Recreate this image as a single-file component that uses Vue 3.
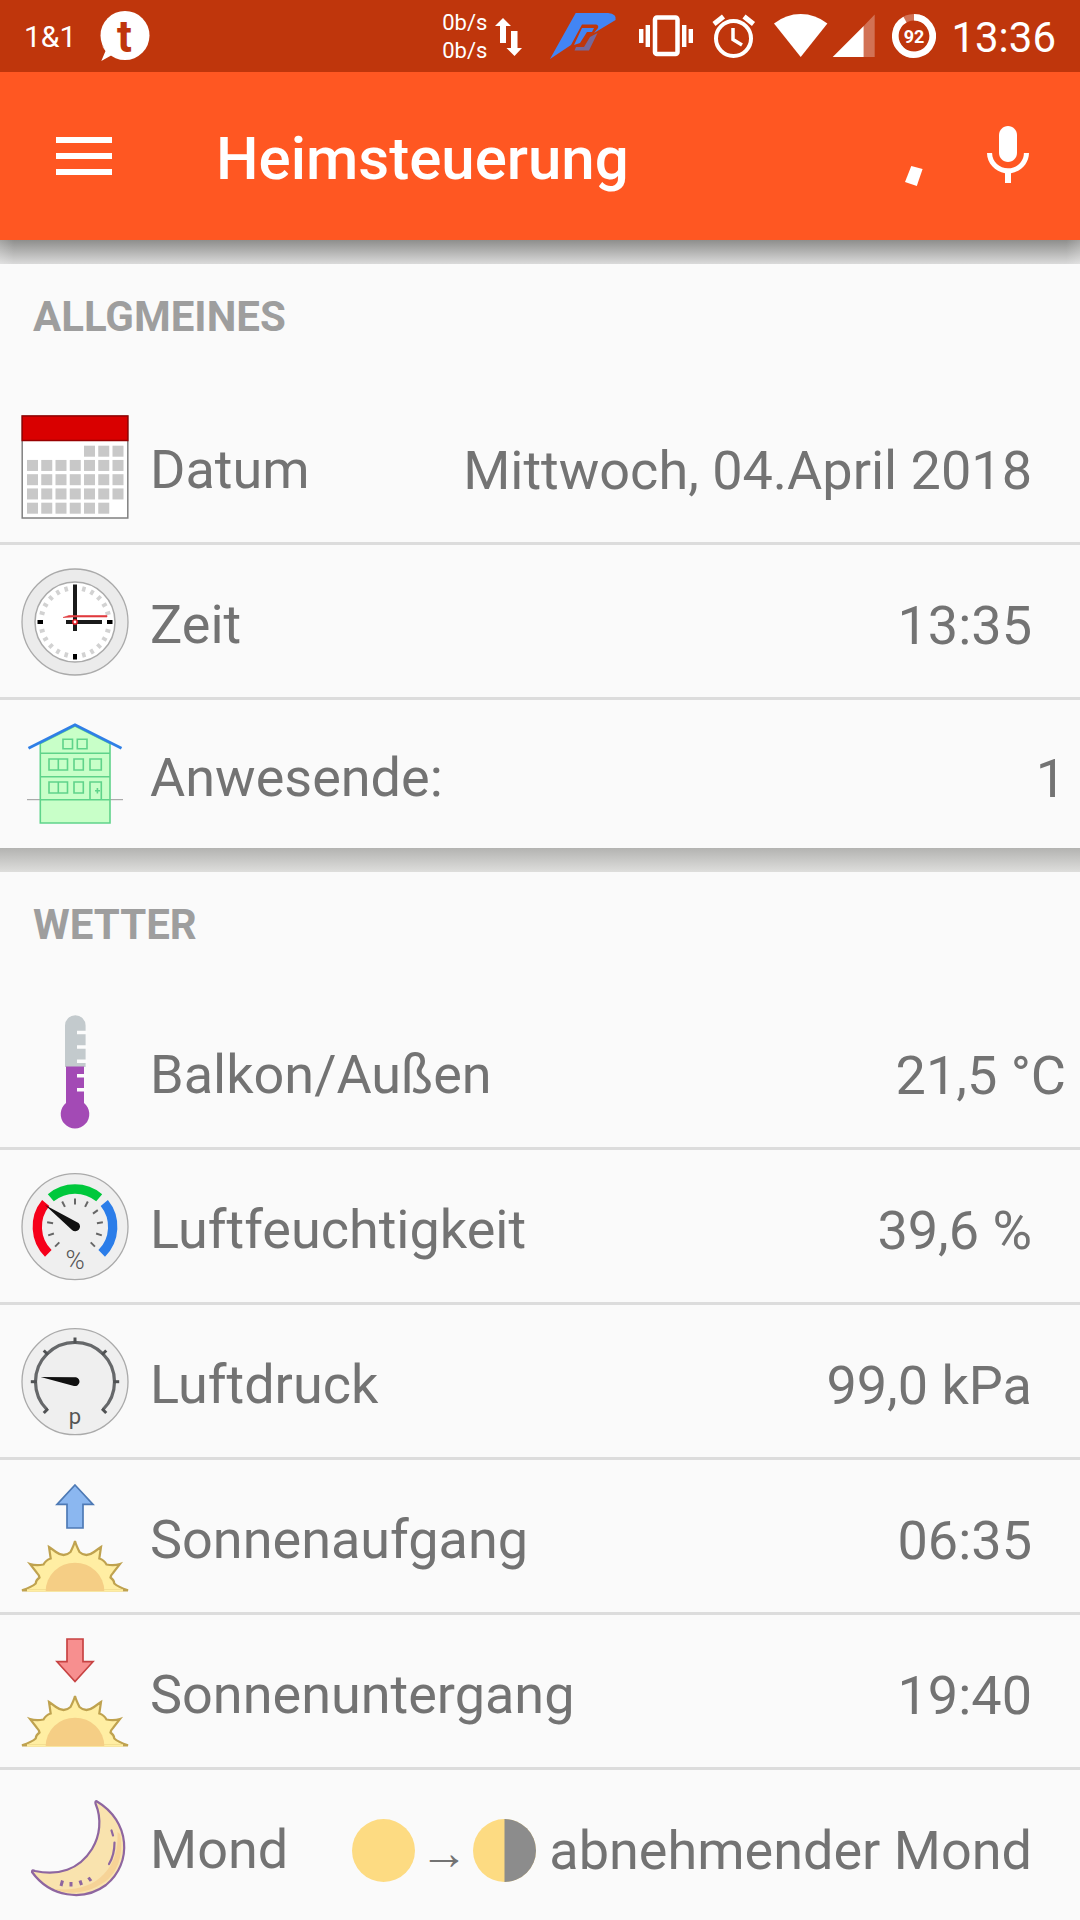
<script setup>
import {ref} from 'vue';

const sections = ref([
  {
    title: 'ALLGMEINES',
    items: [
      {icon: 'calendar', label: 'Datum', value: 'Mittwoch, 04.April 2018'},
      {icon: 'clock', label: 'Zeit', value: '13:35'},
      {icon: 'house', label: 'Anwesende:', value: '1', wide: true},
    ],
  },
  {
    title: 'WETTER',
    items: [
      {icon: 'thermometer', label: 'Balkon/Außen', value: '21,5 °C', wide: true},
      {icon: 'humidity', label: 'Luftfeuchtigkeit', value: '39,6 %'},
      {icon: 'pressure', label: 'Luftdruck', value: '99,0 kPa'},
      {icon: 'sunrise', label: 'Sonnenaufgang', value: '06:35'},
      {icon: 'sunset', label: 'Sonnenuntergang', value: '19:40'},
      {icon: 'moon', label: 'Mond', value: 'abnehmender Mond', phases: true},
    ],
  },
]);

// day squares of the calendar icon, first and last week are not full
const days = [];
for (let row = 0; row < 5; row++) {
  for (let col = 0; col < 7; col++) {
    if ((row === 0 && col < 4) || (row === 4 && col > 5)) continue;
    days.push({x: 6 + col * 14.25, y: 33.7 + row * 14.25});
  }
}

const clockTicks = Array.from({length: 24}, (_, i) => i * 15).filter((a) => a % 90 !== 0);
const humidityTicks = [-135, -108, -81, -27, 0, 27, 54, 81, 108, 135];
const pressureTicks = [-135, -90, -45, 0, 45, 90, 135];
</script>

<template>
  <div class="screen">
    <div class="status-bar">
      <span class="carrier">1&amp;1</span>
      <svg width="50" height="72" viewBox="100 0 50 72">
        <circle cx="125" cy="35.500" r="24.500" fill="#fff"/>
        <path d="M102 46L105.500 51L101.300 61L112 55Z" fill="#fff"/>
        <text x="124.500" y="51.500" class="bubble-letter">t</text>
      </svg>
      <div class="status-right">
        <div class="traffic">
          <div class="speed">
            <span>0b/s</span>
            <span>0b/s</span>
          </div>
          <svg width="28" height="72" viewBox="491 0 28 72" fill="#fff">
            <path d="M499 18L507 26H502V43H496V26H491Z"/>
            <path d="M510.500 56L518 48H513.500V31H507V48H502.500Z"/>
          </svg>
        </div>
        <svg width="86" height="72" viewBox="534 0 86 72">
          <path d="M546 59L571.700 13H604Q613 14 611.600 20L590 33L594 28Q595 25 592 24.500H578L567 45Z" fill="#4285f4"/>
          <path d="M570 45L578 28H590L588 32H583L576 43Z" fill="#4285f4"/>
          <path d="M593.500 33L585 50.500H570.500L572 47H580L586 37Z" fill="#75689c"/>
        </svg>
        <svg width="58" height="72" viewBox="636 0 58 72" fill="#fff">
          <rect x="652" y="17.500" width="22.500" height="36.500" rx="2" fill="none" stroke="#fff" stroke-width="4.500"/>
          <rect x="642.600" y="25" width="4.400" height="22"/>
          <rect x="636" y="29" width="4.400" height="14"/>
          <rect x="679" y="25" width="4.400" height="22"/>
          <rect x="685.600" y="29" width="4.400" height="14"/>
        </svg>
        <svg width="47" height="72" viewBox="710 0 47 72" fill="none" stroke="#fff" stroke-width="4">
          <circle cx="731.500" cy="38.500" r="17.500"/>
          <path d="M731 28V39.500L740 45" stroke-width="3.500"/>
          <path d="M712 24L721.500 16.500M751.500 24L742 16.500" stroke-width="5"/>
        </svg>
        <svg width="103" height="72" viewBox="773 0 103 72" fill="#fff">
          <path d="M799.700 57L773 23.500Q785 14 799.700 14T826.400 23.500Z"/>
          <path d="M831.700 57L862.700 26V57Z"/>
          <path d="M862.700 26L873.700 14.500V57H862.700Z" opacity="0.3"/>
        </svg>
        <svg width="44" height="72" viewBox="892 0 44 72">
          <circle cx="914" cy="36" r="18.700" fill="none" stroke="#fff" stroke-opacity="0.3" stroke-width="6.600"/>
          <path d="M914 17.300A18.700 18.700 0 1 1 905 19.600" fill="none" stroke="#fff" stroke-width="6.600"/>
          <text x="914" y="43" class="battery">92</text>
        </svg>
        <span class="time">13:36</span>
      </div>
    </div>

    <header class="app-bar">
      <button class="icon-button" aria-label="Menü">
        <svg width="56" height="38" viewBox="0 0 56 38" fill="#fff">
          <path d="M0 0H56V6H0ZM0 16H56V22H0ZM0 32H56V38H0Z"/>
        </svg>
      </button>
      <h1>Heimsteuerung</h1>
      <svg width="72" height="72" viewBox="0 0 72 72" fill="#fff">
        <path d="M35.300 46L46.600 49L40.800 66L29 62Z"/>
      </svg>
      <button class="icon-button" aria-label="Spracheingabe">
        <svg width="72" height="72" viewBox="0 0 24 24" fill="#fff">
          <path d="M12 14c1.660 0 3-1.340 3-3V5c0-1.660-1.340-3-3-3S9 3.340 9 5v6c0 1.660 1.340 3 3 3z"/>
          <path d="M17.300 11c0 3-2.540 5.100-5.300 5.100S6.700 14 6.700 11H5c0 3.410 2.720 6.230 6 6.720V21h2v-3.280c3.280-.48 6-3.300 6-6.720h-1.700z"/>
        </svg>
      </button>
    </header>

    <main class="content">
      <section v-for="section in sections" :key="section.title">
        <h2>{{ section.title }}</h2>
        <ul>
          <li v-for="item in section.items" :key="item.label">
            <svg class="icon" viewBox="0 0 108 108">
              <g v-if="item.icon === 'calendar'">
                <rect x="1.200" y="4" width="105.600" height="102" fill="#fff" stroke="#808080" stroke-width="1.500"/>
                <rect x="1.200" y="4" width="105.600" height="24.500" fill="#d90000" stroke="#900" stroke-width="1.500"/>
                <rect v-for="(day, i) in days" :key="i" :x="day.x" :y="day.y" width="11" height="11" fill="#c8c8c8"/>
              </g>

              <g v-else-if="item.icon === 'clock'">
                <circle cx="54" cy="55" r="53" fill="#ebebeb" stroke="#aaa" stroke-width="1.300"/>
                <circle cx="54" cy="55" r="40" fill="#fff" stroke="#aaa" stroke-width="1.500"/>
                <path v-for="a in clockTicks" :key="a" d="M54 18.500V23.500" :transform="`rotate(${a} 54 55)`" stroke="#d2d2d2" stroke-width="3.500"/>
                <path d="M86 55H91.500M54 87V92.500M16.500 55H22" stroke="#000" stroke-width="4"/>
                <path d="M54 17.500V64M45 55H81" stroke="#1a1a1a" stroke-width="4"/>
                <path d="M42 50.500L48 48.500H86V50H52Z" fill="#e03a3e" stroke="#e03a3e" stroke-width="0.600"/>
                <circle cx="54" cy="55" r="2.200" fill="#fff" stroke="#e01b24" stroke-width="1.600"/>
              </g>

              <g v-else-if="item.icon === 'house'" fill="none" stroke="#5fd38a" stroke-width="1.600">
                <path d="M6 79.700H102" stroke="#999" stroke-width="1"/>
                <path d="M19.300 23.500L54 6L89 23.500V103H19.300Z" fill="#c8ffc8"/>
                <path d="M19.300 33.300H89M19.300 56.700H89M19.300 79.700H89"/>
                <path d="M42 19.300h9.500v9.500H42ZM56.300 19.300h9.700v9.500h-9.700Z"/>
                <path d="M28 39h18.500v11H28ZM37.300 39v11M53 39h9.300v11H53ZM69 39h11.300v11H69Z"/>
                <path d="M28 62h18.500v11H28ZM37.300 62v11M53 62h9.300v11H53ZM69 79.700V62h11.300v17.700M74 70.700h5M76.400 68v5.400"/>
                <path d="M7.500 28.300L54 4.800L100.500 28.300" stroke="#2f7fe6" stroke-width="2.800"/>
              </g>

              <g v-else-if="item.icon === 'thermometer'">
                <path d="M44 8.500A10.300 10.300 0 0 1 64.600 8.500V50H44Z" fill="#c3cacd"/>
                <path d="M45 49.500H63V86A14.300 14.300 0 1 1 45 86Z" fill="#a34ab5"/>
                <path d="M56 15.500H66M56 30H66M56 44.300H66M56 58.700H66M56 72.700H66" stroke="#fcfcfc" stroke-width="3.500"/>
              </g>

              <g v-else-if="item.icon === 'humidity'" fill="none">
                <circle cx="54" cy="54.700" r="53" fill="#efefef" stroke="#aaa" stroke-width="1.300"/>
                <g stroke-width="9.300">
                  <path d="M27.300 81.400A37.700 37.700 0 0 1 24.700 31" stroke="#f6001a"/>
                  <path d="M29.800 25.800A37.700 37.700 0 0 1 78.200 25.800" stroke="#00c83c"/>
                  <path d="M83.300 31A37.700 37.700 0 0 1 80.700 81.400" stroke="#2b7de9"/>
                </g>
                <path v-for="a in humidityTicks" :key="a" d="M54 26.500V32.500" :transform="`rotate(${a} 54 54.7)`" stroke="#666" stroke-width="2"/>
                <path d="M24 33L57.500 51A4.500 4.500 0 1 1 51 58Z" fill="#111"/>
                <text x="54" y="97" class="gauge-text percent">%</text>
              </g>

              <g v-else-if="item.icon === 'pressure'" fill="none">
                <circle cx="54" cy="54.700" r="53" fill="#efefef" stroke="#aaa" stroke-width="1.300"/>
                <path d="M26 82.700A39.500 39.500 0 1 1 82 82.700" stroke="#66686a" stroke-width="3.200"/>
                <path v-for="a in pressureTicks" :key="a" d="M54 10.500V16.500" :transform="`rotate(${a} 54 54.7)`" stroke="#505254" stroke-width="3"/>
                <path d="M19.700 50L55 50.200A4.500 4.500 0 1 1 53 59Z" fill="#111"/>
                <text x="54" y="96.500" class="gauge-text">p</text>
              </g>

              <g v-else-if="item.icon === 'sunrise' || item.icon === 'sunset'">
                <path v-if="item.icon === 'sunrise'" d="M54 3L72 22.300H62V46H46V22.300H36Z" fill="#8bb7f0" stroke="#4e7ab5" stroke-width="1.700"/>
                <path v-else d="M46 2H62V24.700H72L54 44.500L36 24.700H46Z" fill="#f78f8f" stroke="#c74343" stroke-width="1.700"/>
                <path d="M1 108.300Q11 105 14.700 101.500Q15 98 18.500 95.500Q18 93 16 91L9 82Q15 84 22.500 82.500Q25 78 29.700 76.500L28 65Q31 67 35 70Q43 76 49.500 70Q53 63 54 59Q55 63 58.500 70Q65 76 73 70Q77 67 80 65L78.300 76.500Q83 78 85.500 82.500Q93 84 99 82L92 91Q90 93 89.500 95.500Q93 98 93.300 101.500Q97 105 107 108.300Z" fill="#ffeea3" stroke="#bfa24f" stroke-width="2.200"/>
                <path d="M6 107.300H102V109.800H6Z" fill="#ffeea3"/>
                <path d="M24.700 109A29.300 28.300 0 0 1 83.300 109Z" fill="#f5ce85"/>
              </g>

              <g v-else-if="item.icon === 'moon'" fill="none" stroke="#8e66a0" stroke-width="2.200" stroke-linecap="round">
                <path d="M76 9.500C109 29 112 71 85 93C62 110 29 105 11 80C11 78 12 78 14 79C37 84 58 78 71 57C79 44 81 27 74.500 11.500C74 9.500 75 8.500 76 9.500Z" fill="#f9e3ae"/>
                <path d="M99 42C103 62 97 82 82 91C66 102 47 103 33 97C55 99 72 94 83 82C94 70 97 58 96.500 40Z" fill="#f6d397" stroke="none"/>
                <path d="M90.500 38.500L92 43.500M93.500 50.500Q93.500 63 88 72"/>
                <path d="M41.500 88.500L40 94M50 90V94.500M59 88.500L60.500 93M67.500 85.500L70 89" stroke-width="3" stroke-linecap="butt"/>
              </g>
            </svg>
            <span class="label">{{ item.label }}</span>
            <span class="value" :class="{wide: item.wide}">
              <template v-if="item.phases">
                <svg class="phase" viewBox="0 0 63 63"><circle cx="31.500" cy="31.500" r="31.500" fill="#fddb82"/></svg>
                <span class="arrow">→</span>
                <svg class="phase" viewBox="0 0 63 63">
                  <circle cx="31.500" cy="31.500" r="31.500" fill="#fddb82"/>
                  <path d="M31.500 0A31.500 31.500 0 0 1 31.500 63Z" fill="#8c8c8c"/>
                </svg>&nbsp;</template>{{ item.value }}</span>
          </li>
        </ul>
      </section>
    </main>
  </div>
</template>

<style>
body {
  margin: 0;
}
</style>

<style scoped>
.screen {
  display: flex;
  flex-direction: column;
  height: 100vh;
  overflow: hidden;
  background: #fafafa;
  color: #737373;
  font-family: Roboto, sans-serif;
}

svg {
  display: block;
  flex-shrink: 0;
}

.status-bar {
  display: flex;
  flex-shrink: 0;
  align-items: center;
  height: 72px;
  padding: 0 24px;
  background: #bf360c;
  color: #fff;
}

.carrier {
  margin-right: 24px;
  font-size: 30px;
}

.bubble-letter {
  fill: #bf360c;
  font-size: 44px;
  font-weight: 700;
  text-anchor: middle;
}

.status-right {
  display: flex;
  align-items: center;
  gap: 15px;
  margin-left: auto;
}

.traffic {
  display: flex;
  align-items: center;
  gap: 8px;
}

.speed {
  display: flex;
  flex-direction: column;
  padding-top: 2px;
  font-size: 22px;
  line-height: 28px;
}

.battery {
  fill: #fff;
  font-size: 18px;
  font-weight: 700;
  text-anchor: middle;
}

.time {
  padding-top: 2px;
  font-size: 42px;
}

.app-bar {
  display: flex;
  flex-shrink: 0;
  align-items: center;
  gap: 24px;
  height: 168px;
  padding: 0 36px 0 56px;
  background: #ff5722;
  color: #fff;
}

.icon-button {
  padding: 0;
  border: none;
  background: none;
  cursor: pointer;
}

h1 {
  flex: 1;
  margin: 0 0 0 80px;
  padding-top: 4px;
  font-size: 60px;
  font-weight: 500;
}

.content {
  flex: 1;
  min-height: 0;
  overflow-y: auto;
  scrollbar-width: none;
}

section::before {
  content: "";
  display: block;
  height: 24px;
  background: linear-gradient(#b3b3b1, #dededc);
}

section:first-child::before {
  background: linear-gradient(to right, rgba(255, 255, 255, 0.2), transparent 14px, transparent calc(100% - 14px), rgba(255, 255, 255, 0.2)), linear-gradient(#8e8e8c, #dadada);
}

h2 {
  height: 123px;
  margin: 0;
  padding: 0 33px;
  box-sizing: border-box;
  color: #9e9e9e;
  font-size: 42px;
  font-weight: 700;
  line-height: 106px;
}

section:first-child h2 {
  height: 126px;
}

ul {
  margin: 0;
  padding: 0;
  list-style: none;
}

li {
  display: flex;
  align-items: center;
  height: 152px;
  padding-left: 21px;
  border-bottom: 3px solid #dcdcdc;
  font-size: 54px;
  line-height: 64px;
}

section:first-child li:last-child {
  height: 148px;
  border-bottom: none;
}

.icon {
  width: 108px;
  height: 108px;
  overflow: visible;
}

.gauge-text {
  fill: #555;
  font-size: 22px;
  text-anchor: middle;
}

.percent {
  font-size: 26px;
  font-weight: 300;
}

.label {
  padding: 8px 0 0 21px;
}

.value {
  margin-left: auto;
  padding: 10px 48px 0 0;
  white-space: nowrap;
}

.value.wide {
  padding-right: 14px;
}

.phase {
  display: inline-block;
  width: 63px;
  height: 63px;
  vertical-align: -13px;
}

.arrow {
  margin: 0 5px;
  font-family: "Liberation Serif", serif;
  font-size: 48px;
  line-height: 1;
}
</style>
